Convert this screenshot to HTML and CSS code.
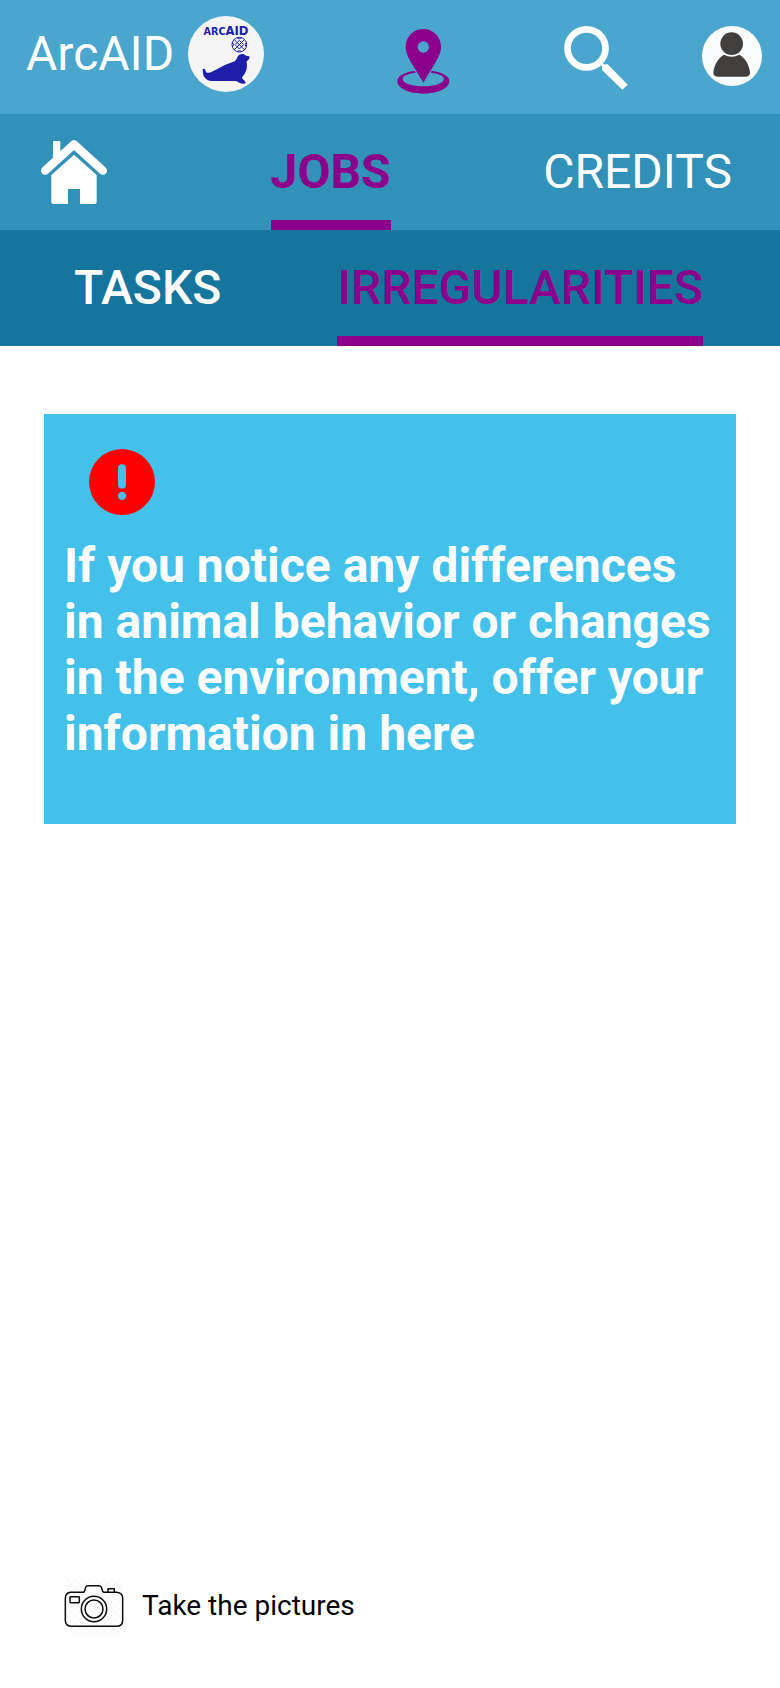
FILE: index.html
```html
<!DOCTYPE html>
<html lang="en">
<head>
<meta charset="utf-8">
<meta name="viewport" content="width=device-width, initial-scale=1">
<title>ArcAID – Irregularities</title>
<link rel="stylesheet" href="styles.css">
</head>
<body>
<header class="topbar">
  <a class="brand" href="#">
    <span class="brand-name">ArcAID</span>
    <svg class="brand-logo" viewBox="24 24 228 228" aria-hidden="true">
      <circle cx="138" cy="138" r="114" fill="#f5f5f5"/>
      <g fill="#1e1eaa">
        <text class="logo-text" x="138" y="82" text-anchor="middle"><tspan font-size="29">ARC</tspan><tspan font-size="35">AID</tspan></text>
        <path d="M68 184Q73 180 76 186C77 197 86 196 96 191C108 185 115 183 122 178C137 168 152 165 164 160C171 155 170 150 174 144C179 136 193 136 198 143L208 145Q210 151 205 156L200 160C201 175 203 185 191 202C187 207 185 209 187 212C192 216 197 220 197 226C186 230 175 223 168 219L92 219C78 217 70 206 69 196Z"/>
      </g>
      <g fill="none" stroke="#1e1eaa" stroke-width="3">
        <circle cx="178" cy="110" r="22"/>
        <path d="M162 94L194 126M194 94L162 126M171 89Q178 96 185 89M171 131Q178 124 185 131M157 103Q164 110 157 117M199 103Q192 110 199 117"/>
        <path d="M165 110L178 97L191 110L178 123Z"/>
      </g>
    </svg>
  </a>
  <button class="icon-button" type="button" aria-label="Location">
    <svg class="pin" viewBox="51 3 159 240" fill="#8b008b" aria-hidden="true">
      <path fill-rule="evenodd" d="M130 42C159 42 183 65 183 95C183 115 172 133 162 150L130 203L98 150C88 133 77 115 77 95C77 65 101 42 130 42ZM130 79A17 17 0 1 0 130 113A17 17 0 1 0 130 79Z"/>
      <path d="M104 167C72 171 52 184 52 198C52 220 87 236 130 236C173 236 208 220 208 198C208 184 188 171 155 167L152 173C178 176 192 183 192 192C192 205 164 214 130 214C96 214 68 205 68 192C68 183 82 176 107 173Z"/>
    </svg>
  </button>
  <button class="icon-button" type="button" aria-label="Search">
    <svg class="search" viewBox="42 18 192 240" aria-hidden="true">
      <circle cx="109.500" cy="115" r="57" fill="none" stroke="#fff" stroke-width="20"/>
      <path fill="#fff" d="M154 156L161 163H173L233 224L217 239L156 180V168L149 161Z"/>
    </svg>
  </button>
  <button class="icon-button" type="button" aria-label="Profile">
    <svg class="avatar" viewBox="456 18 180 240" aria-hidden="true">
      <circle cx="546" cy="138" r="90" fill="#fafbfd"/>
      <circle cx="545" cy="101" r="34" fill="#403f3d"/>
      <path fill="#403f3d" d="M522 134Q545 146 568 134C588 145 598 168 600 187Q600 200 588 200H502Q490 200 490 187C492 166 505 143 522 134Z"/>
    </svg>
  </button>
</header>

<nav class="nav" aria-label="Main">
  <a class="nav-link" href="#" aria-label="Home">
    <svg class="home" viewBox="123 90 198 192" aria-hidden="true">
      <path fill="none" stroke="#fff" stroke-width="25" stroke-linecap="round" stroke-linejoin="round" d="M135.500 182L222 103L308.500 182"/>
      <path fill="#fff" d="M159 150V96Q159 93 162 93H178Q181 93 181 96V130Z"/>
      <path fill="#fff" d="M222 134L290 195V276Q290 282 284 282H240V237H204V282H160Q154 282 154 276V195Z"/>
    </svg>
  </a>
  <a class="nav-link nav-link-strong nav-link-active" href="#" aria-current="true">JOBS</a>
  <a class="nav-link" href="#">CREDITS</a>
</nav>

<nav class="subnav" aria-label="Jobs">
  <a class="nav-link" href="#">TASKS</a>
  <a class="nav-link nav-link-active" href="#" aria-current="page">IRREGULARITIES</a>
</nav>

<main class="content">
  <section class="notice">
    <svg class="notice-icon" viewBox="0 0 200 200" aria-hidden="true">
      <circle cx="100" cy="100" r="100" fill="#f00"/>
      <rect x="88" y="46" width="24" height="74" rx="12" fill="#43c1eb"/>
      <circle cx="100" cy="142" r="12.500" fill="#43c1eb"/>
    </svg>
    <p class="notice-text">If you notice any differences in animal behavior or changes in the environment, offer your information in here</p>
  </section>

  <button class="camera-button" type="button">
    <svg class="camera" viewBox="0 0 180 180" aria-hidden="true">
      <defs>
        <pattern id="mesh" width="22" height="22" patternUnits="userSpaceOnUse">
          <path d="M0 0L22 22M22 0L0 22" stroke="#f1f1f1" stroke-width="1.500"/>
        </pattern>
      </defs>
      <rect x="6" y="6" width="168" height="168" fill="url(#mesh)"/>
      <g fill="none" stroke="#0c0c0c" stroke-width="4.500" stroke-linejoin="round">
        <path d="M20 49H56Q61 49 62 45L65 34Q67 29 72 29H104Q110 29 112 34L116 46Q117 49 122 49H158Q176 51 176 66V134Q175 151 158 151H20Q5 150 4 134V66Q5 50 20 49Z"/>
        <path d="M132 49V38H151V49"/>
        <rect x="18" y="62" width="28" height="18" rx="2"/>
        <circle cx="90" cy="99" r="38"/>
        <circle cx="90" cy="99" r="27"/>
      </g>
    </svg>
    <span>Take the pictures</span>
  </button>
</main>
</body>
</html>
```
FILE: styles.css
```css
* {
  box-sizing: border-box;
}

body {
  display: flex;
  flex-direction: column;
  min-height: 100vh;
  margin: 0;
  background: #fff;
  color: #fff;
  font-family: Roboto, "Liberation Sans", sans-serif;
  font-size: 48px;
  line-height: 56px;
}

a {
  color: inherit;
  text-decoration: none;
}

button {
  padding: 0;
  border: 0;
  background: none;
  font: inherit;
  cursor: pointer;
}

svg {
  display: block;
  flex: none;
}

/* Top bar */
.topbar {
  display: grid;
  grid-template-columns: 371fr 167fr 138fr 60px;
  align-items: start;
  justify-items: start;
  padding: 16px 18px 18px 26px;
  background: #4aa6cc;
}

.brand {
  display: flex;
  align-items: center;
  gap: 14px;
}

.brand-logo {
  width: 76px;
  height: 76px;
}

.logo-text {
  font-family: "DejaVu Sans", sans-serif;
  font-weight: 700;
}

.pin {
  width: 53px;
  height: 80px;
}

.search {
  width: 64px;
  height: 80px;
}

.avatar {
  width: 60px;
  height: 80px;
}

/* Navigation rows */
.nav,
.subnav {
  min-height: 116px;
}

.nav {
  display: grid;
  grid-template-columns: 229fr 272fr auto;
  justify-items: start;
  padding: 0 48px 0 41px;
  background: #3291b8;
}

.subnav {
  display: flex;
  justify-content: space-between;
  padding: 0 77px 0 74px;
  background: #15759d;
  font-weight: 500;
}

.nav-link {
  display: flex;
  align-items: center;
  border-top: 10px solid transparent;
  border-bottom: 10px solid transparent;
}

.nav-link-strong {
  font-weight: 700;
}

.nav-link-active {
  border-bottom-color: #8b008b;
  color: #8b008b;
}

.home {
  width: 66px;
  height: 64px;
}

/* Page content */
.content {
  display: flex;
  flex: 1;
  flex-direction: column;
  padding: 68px 44px 52px;
}

.notice {
  padding: 35px 20px 62px;
  background: #43c1eb;
}

.notice-icon {
  width: 66px;
  height: 66px;
  margin: 0 0 23px 25px;
}

.notice-text {
  margin: 0;
  font-weight: 700;
}

.camera-button {
  display: flex;
  align-items: center;
  align-self: flex-start;
  gap: 18px;
  margin: auto 0 0 20px;
  color: #000;
  font-size: 28px;
  line-height: 32px;
}

.camera {
  width: 60px;
  height: 60px;
}
```
